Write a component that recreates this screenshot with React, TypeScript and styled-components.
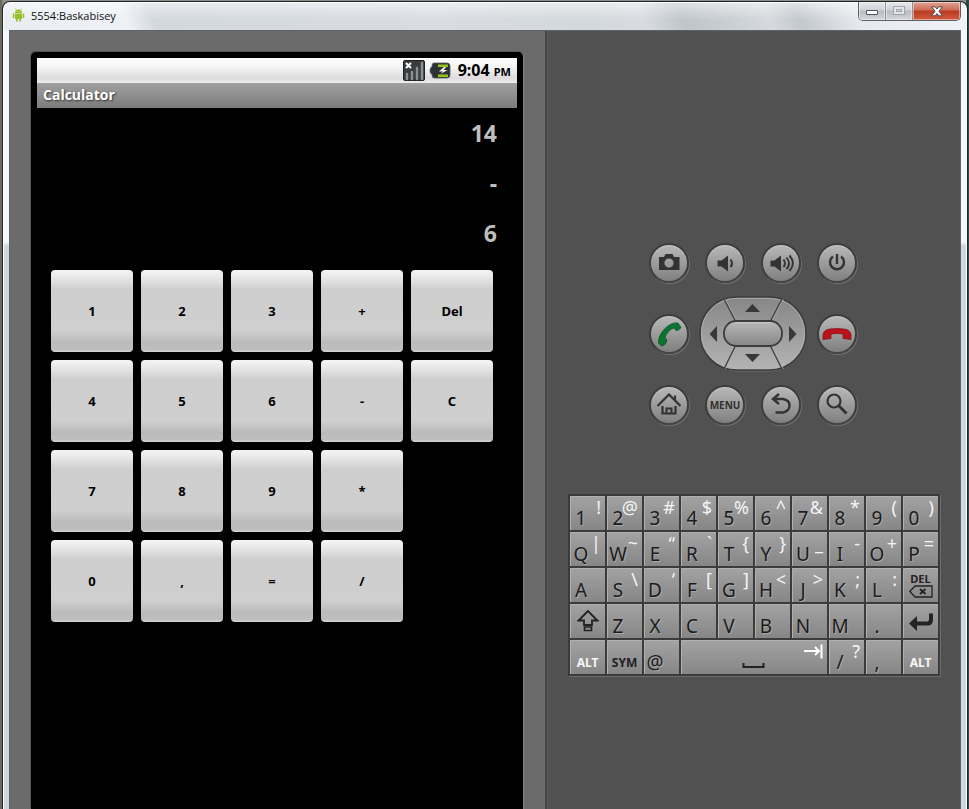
import React from "react";
import styled, { createGlobalStyle } from "styled-components";

const Global = createGlobalStyle`
  * { box-sizing: border-box; }
  html, body, #root { height: 100%; }
  body { margin: 0; overflow: hidden; background: #3b3a35; font-family: "Noto Sans", "Open Sans", sans-serif; }
  button { font-family: inherit; margin: 0; padding: 0; border: 0; }
`;

const Desktop = styled.div`
  height: 100vh;
  padding: 1px 1px 0 2px;
  display: flex;
  background: linear-gradient(90deg, #6c6a5c 0 2px, transparent 2px calc(100% - 3px), #2f4a42 calc(100% - 3px)),
    linear-gradient(#8d9088, #55584f 30px);
`;

const Window = styled.div`
  flex: 1;
  min-width: 0;
  display: flex;
  flex-direction: column;
  padding: 0 6px;
  border: 1px solid #20242a;
  border-bottom: 0;
  border-radius: 8px 8px 0 0;
  box-shadow: inset 1px 1px 0 #ffffff, inset -1px 0 0 #ffffff;
  background:
    linear-gradient(rgba(255,255,255,.5), rgba(255,255,255,0) 18px) 0 0 / 100% 28px no-repeat,
    linear-gradient(65deg, #e9edf1 0, #eef1f5 13%, #d3d8dd 16%, #d9dde2 45%, #d3d8dc 60%, #d8dce1 66%, #bfc5ca 70%, #cdd2d6 76%, #d6dade 79%, #c3c8cd 82%, #e6e9ed 88%, #eff2f6 100%) 0 0 / 100% 28px no-repeat,
    linear-gradient(#f4f7fc 0 240px, #d0d6dd 244px);
`;

const TitleBar = styled.header`
  height: 28px;
  flex: none;
  display: flex;
  align-items: flex-start;
  gap: 6px;
  padding: 0 0 0 3px;
`;

const TitleIcon = styled.svg`
  width: 13px;
  height: 15px;
  margin-top: 6px;
`;

const Title = styled.h1`
  margin: 4px 0 0;
  flex: 1;
  font: 400 12px/20px "Open Sans", sans-serif;
  font-size: 11px;
  color: #111;
`;

const WindowControls = styled.div`
  display: flex;
  height: 19px;
  border: 1px solid #5c6166;
  border-top: 0;
  border-radius: 0 0 5px 5px;
  overflow: hidden;
`;

const ControlButton = styled.button<{ $close?: boolean }>`
  width: ${(p) => (p.$close ? 47 : 27)}px;
  display: grid;
  place-items: center;
  border-right: ${(p) => (p.$close ? "0" : "1px solid #8d9296")};
  box-shadow: inset 0 0 0 1px rgba(255, 255, 255, 0.45);
  background: ${(p) =>
    p.$close
      ? "linear-gradient(#e0a394, #cf6a54 45%, #b93a22 50%, #d25c3c)"
      : "linear-gradient(#e6e9ec, #cfd3d7 45%, #b7bcc1 50%, #d3d7da)"};
`;

const Emulator = styled.main`
  flex: 1;
  min-height: 0;
  display: flex;
  border: 1px solid #5f6468;
  border-bottom: 0;
  background: #515151;
`;

const DevicePane = styled.section`
  flex: 0 0 537px;
  display: flex;
  padding: 21px 21px 0 21px;
  background: #6b6b6b;
  border-right: 2px solid #444;
`;

const Phone = styled.div`
  flex: 1;
  padding: 6px;
  background: #000;
  border: solid #858585;
  border-width: 0 1px 0 0;
  border-radius: 5px 5px 0 0;
  box-shadow: -1px -1px 0 #555;
`;

const StatusBar = styled.div`
  height: 25px;
  display: flex;
  align-items: center;
  justify-content: flex-end;
  gap: 4px;
  padding-right: 6px;
  background: linear-gradient(#ffffff, #f3f3f3 40%, #dddbdd 80%, #eeeeee);
`;

const StatusIcon = styled.svg`
  width: 22px;
  height: 21px;
`;

const Clock = styled.time`
  margin-left: 3px;
  padding-top: 1px;
  font: 700 16px/24px "Noto Sans", sans-serif;
  color: #000;
  white-space: nowrap;
`;

const Meridiem = styled.span`
  font-size: 11px;
`;

const AppTitle = styled.h2`
  margin: 0;
  height: 25px;
  padding-left: 6px;
  font: 700 14px/24px "Open Sans", sans-serif;
  color: #fff;
  text-shadow: 1px 1px 2px #333;
  background: linear-gradient(#a0a0a0, #7c7c7c);
`;

const Display = styled.div`
  display: grid;
  grid-auto-rows: 50px;
  padding-right: 20px;
  text-align: right;
`;

const DisplayLine = styled.output`
  font: 700 23px/50px "Noto Sans", sans-serif;
  color: #bebebe;
`;

const Pad = styled.div`
  display: grid;
  grid-template-columns: repeat(5, 82px);
  grid-auto-rows: 82px;
  gap: 8px;
  padding: 12px 0 0 14px;
`;

const PadKey = styled.button<{ $column: number }>`
  grid-column: ${(p) => p.$column};
  padding-bottom: 1px;
  border-radius: 4px;
  font-size: 13px;
  line-height: 20px;
  font-weight: 700;
  color: #000;
  background: linear-gradient(#f5f5f5, #e6e6e6 10%, #cfcecf 24%, #d0cfd0 74%, #bbbbbb 88%, #bebebe 97%, #d6d6d6);
`;

const ControlsPane = styled.section`
  flex: 1;
  min-width: 0;
  display: flex;
  flex-direction: column;
  align-items: center;
  padding: 212px 0 0;
  border-left: 1px solid #5b5b5b;
`;

const Hardware = styled.div`
  display: grid;
  grid-template-columns: repeat(4, 40px);
  grid-template-rows: 40px 76px 40px;
  column-gap: 16px;
  row-gap: 13px;
  align-items: center;
  padding-right: 2px;
`;

const RoundButton = styled.button`
  width: 40px;
  height: 40px;
  border-radius: 50%;
  border: 2px solid #3d3d3d;
  border-bottom-color: #454545;
  box-shadow: 1px 1px 0 #707070, inset 0 1px 1px #c8c8c8;
  background: linear-gradient(#b8b8b8, #808080);
  display: grid;
  place-items: center;
  font: 700 10px/14px "Noto Sans", sans-serif;
  color: #303030;
`;

const Glyph = styled.svg`
  display: block;
  width: 36px;
  height: 36px;
  overflow: visible;
`;

const PadWheel = styled.div`
  grid-column: 2 / 4;
  justify-self: center;
  width: 108px;
  height: 76px;
`;

const WheelDrawing = styled.svg`
  display: block;
  width: 108px;
  height: 76px;
`;

const Keyboard = styled.div`
  margin-top: 69px;
  width: 372px;
  display: grid;
  grid-template-columns: repeat(10, minmax(0, 1fr));
  grid-auto-rows: 34px;
  gap: 2px;
  padding: 2px;
  background: #3b3b3b;
  box-shadow: 1px 1px 0 #6d6d6d;
`;

const KeyCap = styled.button<{ $span?: number }>`
  grid-column: span ${(p) => p.$span ?? 1};
  display: flex;
  box-shadow: inset 1px 1px 0 #b0b0b0;
  background: linear-gradient(#a3a3a3, #868686);
`;

const Key = styled(KeyCap)`
  justify-content: space-between;
  padding: 0 4px 0 0;
`;

const Legend = styled.span`
  width: 22px;
  flex: none;
  align-self: flex-end;
  display: flex;
  justify-content: center;
  font-size: 19px;
  line-height: 24px;
  color: #1c1c1c;
  text-shadow: 1px 1px 0 #a8a8a8;
`;

const AltLegend = styled.span`
  width: 9px;
  display: flex;
  justify-content: flex-end;
  font-size: 18px;
  line-height: 22px;
  color: #f4f4f4;
`;

const WordKey = styled(KeyCap)<{ $light?: boolean }>`
  align-items: center;
  justify-content: center;
  padding-top: 12px;
  font-size: 12px;
  line-height: 16px;
  font-weight: 700;
  color: ${(p) => (p.$light ? "#f6f6f6" : "#222")};
`;

const IconKey = styled(KeyCap)`
  flex-direction: column;
  align-items: center;
  justify-content: center;
  font-size: 11px;
  line-height: 12px;
  font-weight: 700;
  color: #222;
`;

const KeyDrawing = styled.svg`
  display: block;
  flex: none;
`;

const padRows = [
  ["1", "2", "3", "+", "Del"],
  ["4", "5", "6", "-", "C"],
  ["7", "8", "9", "*"],
  ["0", ",", "=", "/"],
];

const letterRows: [string, string][] = [
  ["1", "!"], ["2", "@"], ["3", "#"], ["4", "$"], ["5", "%"], ["6", "^"], ["7", "&"], ["8", "*"], ["9", "("], ["0", ")"],
  ["Q", "|"], ["W", "~"], ["E", "“"], ["R", "`"], ["T", "{"], ["Y", "}"], ["U", "_"], ["I", "-"], ["O", "+"], ["P", "="],
  ["A", ""], ["S", "\\"], ["D", "‘"], ["F", "["], ["G", "]"], ["H", "<"], ["J", ">"], ["K", ";"], ["L", ":"],
];
const bottomLetters = ["Z", "X", "C", "V", "B", "N", "M", "."];

function CharKey({ main, alt = "" }: { main: string; alt?: string }) {
  return (
    <Key>
      <Legend>{main}</Legend>
      <AltLegend>{alt}</AltLegend>
    </Key>
  );
}

function DirectionWheel() {
  return (
    <PadWheel role="group" aria-label="Direction pad">
      <WheelDrawing viewBox="0 0 108 76">
        <defs>
          <linearGradient id="wheel" x1="0" y1="0" x2="0" y2="1">
            <stop offset="0" stopColor="#868686" />
            <stop offset="1" stopColor="#b4b4b4" />
          </linearGradient>
          <linearGradient id="center" x1="0" y1="0" x2="0" y2="1">
            <stop offset="0" stopColor="#b8b8b8" />
            <stop offset="1" stopColor="#868686" />
          </linearGradient>
        </defs>
        <rect x="2" y="2" width="105" height="73" rx="37" fill="none" stroke="#707070" />
        <rect x="1" y="1" width="106" height="73" rx="36.5" fill="url(#wheel)" stroke="#3c3c3c" strokeWidth="1.6" />
        <rect x="2.4" y="2.4" width="103.2" height="70.2" rx="35" fill="none" stroke="#b4b4b4" strokeWidth=".8" />
        <path d="M25 3 37 26M83 3 71 26M25 73 37 49M83 73 71 49" stroke="#444" strokeWidth="1.5" />
        <path d="M26.4 3 38.4 26M84.4 3 72.4 26M26.4 73 38.4 49M84.4 73 72.4 49" stroke="#b4b4b4" strokeWidth=".6" />
        <rect x="25" y="25" width="58" height="25" rx="12" fill="url(#center)" stroke="#3c3c3c" strokeWidth="1.8" />
        <path d="M36 26.7h36" stroke="#cccccc" strokeWidth="1" />
        <path d="M46 16 53.5 8 61 16ZM46 58h15l-7.500 8ZM18 30v16l-7.500-8ZM90 30v16l7.500-8Z" fill="#383838" />
      </WheelDrawing>
    </PadWheel>
  );
}

export default function App() {
  return (
    <>
      <Global />
      <Desktop>
        <Window>
          <TitleBar>
            <TitleIcon viewBox="0 0 13 15" aria-hidden="true">
              <path d="M3 5a3.500 3.500 0 0 1 7 0ZM3 5.500h7V11H9v2.500H7.300V11H5.700v2.500H4V11H3ZM.8 5.500h1.500V10H.8ZM10.700 5.500h1.500V10h-1.500Z" fill="#96bf2b" />
              <path d="m3.500.5 1.200 2M9.500.5l-1.200 2" stroke="#96bf2b" strokeWidth=".7" />
              <path d="M4.800 3.300h.8v.8h-.8ZM7.500 3.300h.8v.8h-.8Z" fill="#fff" />
            </TitleIcon>
            <Title>5554:Baskabisey</Title>
            <WindowControls>
              <ControlButton aria-label="Minimize">
                <svg width="14" height="10" viewBox="0 0 14 10"><rect x="1.500" y="4.500" width="11" height="4" rx=".5" fill="#fff" stroke="#4c525a" /></svg>
              </ControlButton>
              <ControlButton aria-label="Maximize" disabled>
                <svg width="12" height="10" viewBox="0 0 12 10"><rect x=".5" y=".5" width="11" height="8" fill="#e3e5e7" stroke="#a1a5a9" /><rect x="3.500" y="3.500" width="5" height="2" fill="#d0d3d6" stroke="#a1a5a9" /></svg>
              </ControlButton>
              <ControlButton $close aria-label="Close">
                <svg width="12" height="11" viewBox="0 0 12 11"><path d="M.7.8h3.500L6 3 7.800.8h3.500L8 5.300l3.500 4.500H7.900L6 7.500 4.100 9.800H.5L4 5.300Z" fill="#fff" stroke="#54464a" strokeWidth="1" /></svg>
              </ControlButton>
            </WindowControls>
          </TitleBar>
          <Emulator>
            <DevicePane>
              <Phone>
                <StatusBar>
                  <StatusIcon viewBox="0 0 22 21" role="img" aria-label="No signal">
                    <rect x=".5" y=".5" width="21" height="20" rx="1.500" fill="#3a3d3f" stroke="#222" />
                    <path d="M4 14v5M9 12v7M14 8v11M19 3v16" stroke="#8d9092" strokeWidth="2.400" strokeLinecap="round" />
                    <path d="m3 3 5 5M8 3 3 8" stroke="#fff" strokeWidth="2" />
                  </StatusIcon>
                  <StatusIcon viewBox="0 0 22 21" role="img" aria-label="Battery charging">
                    <path d="M5 3h13q3 0 3 3v9q0 3-3 3H5q-2 0-2-3v-1q-2 0-2-3.500T3 7V6q0-3 2-3Z" fill="#2f3234" stroke="#55585a" strokeWidth=".8" />
                    <path d="M9 4.500h10V7H9ZM9 14.500h10V17H9Z" fill="#97c51c" />
                    <path d="m15 7-5 4.500h4L11.500 14l7-4h-4L17 7Z" fill="#fff" />
                  </StatusIcon>
                  <Clock>9:04 <Meridiem>PM</Meridiem></Clock>
                </StatusBar>
                <AppTitle>Calculator</AppTitle>
                <Display>
                  <DisplayLine>14</DisplayLine>
                  <DisplayLine>-</DisplayLine>
                  <DisplayLine>6</DisplayLine>
                </Display>
                <Pad>
                  {padRows.flatMap((row) =>
                    row.map((label, column) => (
                      <PadKey key={label} $column={column + 1}>{label}</PadKey>
                    ))
                  )}
                </Pad>
              </Phone>
            </DevicePane>
            <ControlsPane>
              <Hardware>
                <RoundButton aria-label="Camera">
                  <Glyph viewBox="0 0 36 36"><path fillRule="evenodd" d="M8 12h5l1.500-3h7l1.500 3h5.500v13H8ZM18 13.500a4.600 4.600 0 1 0 0 9.200 4.600 4.600 0 0 0 0-9.200Z" fill="#333" /></Glyph>
                </RoundButton>
                <RoundButton aria-label="Volume down">
                  <Glyph viewBox="0 0 36 36"><path d="M10.500 15.500h4L21 10.500v16l-6.500-5h-4Z" fill="#333" /><path d="M23.500 14.500q3 4 0 7.500" stroke="#333" strokeWidth="2" fill="none" /></Glyph>
                </RoundButton>
                <RoundButton aria-label="Volume up">
                  <Glyph viewBox="0 0 36 36"><path d="M7.500 15.500h4L18 10.500v16l-6.500-5h-4Z" fill="#333" /><path d="M20.500 14.500q3 4 0 7.500M23.500 12.500q5 6 0 11.500M26.500 10.500q7 8 0 15.500" stroke="#333" strokeWidth="1.900" fill="none" /></Glyph>
                </RoundButton>
                <RoundButton aria-label="Power">
                  <Glyph viewBox="0 0 36 36"><path d="M18 9v10M14 11.500a7 7 0 1 0 8 0" stroke="#333" strokeWidth="2.400" fill="none" /></Glyph>
                </RoundButton>
                <RoundButton aria-label="Call">
                  <Glyph viewBox="0 0 36 36"><path d="M7.500 27Q7 20 13.500 13T27 7l3 4.500q-1.500 3-5 3l-2-2.500q-3 .5-5.500 3.500T14 21.500l2 2.500q-.5 4-4.500 6Q9 29.500 7.500 27Z" fill="#0c7430" stroke="#075020" strokeWidth=".7" /></Glyph>
                </RoundButton>
                <DirectionWheel />
                <RoundButton aria-label="End call">
                  <Glyph viewBox="0 0 36 36"><path d="M4 23.500v-5q1-5 7-5.500 7-1 14 0 6 .5 7 5.500v5l-8-1v-4.500q-6-1-12 0v4.500Z" fill="#bd121a" stroke="#7d1015" strokeWidth=".7" /></Glyph>
                </RoundButton>
                <RoundButton aria-label="Home">
                  <Glyph viewBox="0 0 36 36"><path d="M6.500 19 18 7.500 29.500 19M24 13V8.500M11.500 19v7.500h13V19" stroke="#333" strokeWidth="2.200" fill="none" /><path d="M15.500 26v-4.500h5V26" stroke="#333" strokeWidth="2" fill="none" /></Glyph>
                </RoundButton>
                <RoundButton>MENU</RoundButton>
                <RoundButton aria-label="Back">
                  <Glyph viewBox="0 0 36 36"><path d="m16 7-6 5 6 5M11 12h9q6.500 1 6.500 6.500T20 25.500h-7.500" stroke="#333" strokeWidth="2.400" fill="none" /></Glyph>
                </RoundButton>
                <RoundButton aria-label="Search">
                  <Glyph viewBox="0 0 36 36"><circle cx="15" cy="14" r="6.500" fill="none" stroke="#333" strokeWidth="2.200" /><path d="m19.500 18.500 8 8" stroke="#333" strokeWidth="3" /></Glyph>
                </RoundButton>
              </Hardware>
              <Keyboard>
                {letterRows.map(([main, alt]) => (
                  <CharKey key={main} main={main} alt={alt} />
                ))}
                <IconKey>
                  DEL
                  <KeyDrawing width="24" height="13" viewBox="0 0 24 13"><path d="M.8 6.500 6 1h17v11H6Z" fill="none" stroke="#222" strokeWidth="1.300" /><path d="m11 4 5.500 5M16.500 4 11 9" stroke="#222" strokeWidth="1.800" /></KeyDrawing>
                </IconKey>
                <IconKey aria-label="Shift">
                  <KeyDrawing width="22" height="22" viewBox="0 0 22 22"><path d="M11 1 1.500 10.500H7V15h8v-4.500h5.500Z" fill="none" stroke="#222" strokeWidth="1.800" /><path d="M7.500 17h7v3.500h-7Z" fill="none" stroke="#222" strokeWidth="1.600" /></KeyDrawing>
                </IconKey>
                {bottomLetters.map((letter) => (
                  <CharKey key={letter} main={letter} />
                ))}
                <IconKey aria-label="Enter">
                  <KeyDrawing width="26" height="20" viewBox="0 0 26 20"><path d="M1 12.500 9 5v5.500h10q2 0 2-2V2.500h4V9q0 5.500-5.500 5.500H9V20Z" fill="#242424" /></KeyDrawing>
                </IconKey>
                <WordKey $light>ALT</WordKey>
                <WordKey>SYM</WordKey>
                <CharKey main="@" />
                <IconKey $span={4} aria-label="Space">
                  <KeyDrawing width="146" height="34" viewBox="0 0 146 34"><path d="M62.500 23v4h20v-4" fill="none" stroke="#222" strokeWidth="2" /><path d="M123 11h15M134 7l4 4-4 4M140.500 4.500v14" fill="none" stroke="#fff" strokeWidth="2" /></KeyDrawing>
                </IconKey>
                <CharKey main="/" alt="?" />
                <CharKey main="," />
                <WordKey $light>ALT</WordKey>
              </Keyboard>
            </ControlsPane>
          </Emulator>
        </Window>
      </Desktop>
    </>
  );
}
